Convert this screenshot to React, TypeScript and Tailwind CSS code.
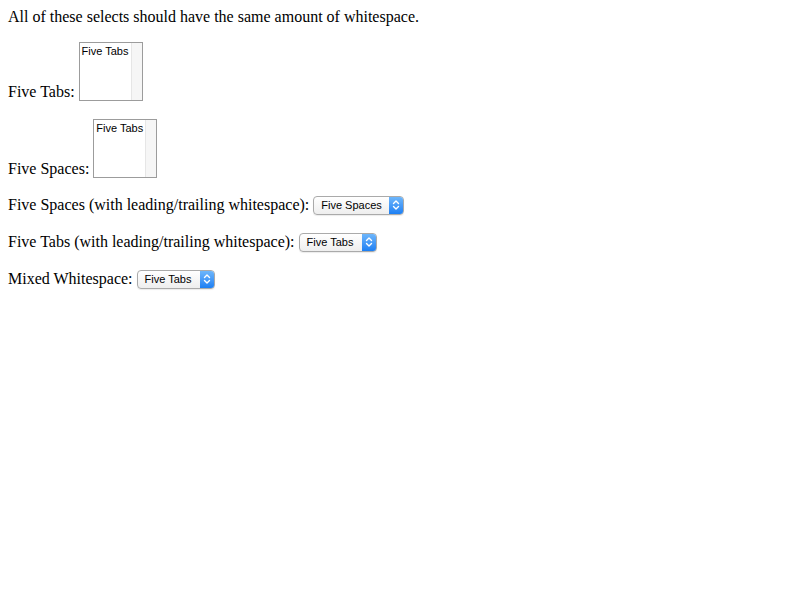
const serif = "font-['Liberation_Serif','Times_New_Roman',serif]";
const sans = "font-['Liberation_Sans',Arial,sans-serif]";

function ListBox({ width, label }: { width: string; label: string }) {
  return (
    <div className={`flex h-[59px] ${width} border border-[#9c9c9c] bg-white`}>
      <div className={`flex-1 pl-[2px] pt-[1px] text-[11px] leading-[14px] text-black ${sans}`}>
        {label}
      </div>
      <div className="w-[11px] border-l border-[#e6e6e6] bg-[#f6f6f6]" />
    </div>
  );
}

function PopUp({ width, label }: { width: string; label: string }) {
  return (
    <div
      className={`flex h-[19px] ${width} overflow-hidden rounded-[4px] border border-[#aaaaaa] bg-linear-to-b from-white to-[#eeeeee] shadow-[0_1px_1px_rgba(0,0,0,0.08)]`}
    >
      <div className={`flex flex-1 items-center pl-[7px] text-[11px] text-black ${sans}`}>
        {label}
      </div>
      <div className="flex w-[14px] items-center justify-center bg-linear-to-b from-[#6db6fb] to-[#1b7ff3]">
        <svg width="8" height="12" viewBox="0 0 8 12" fill="none">
          <path d="M1.5 4.5 L4 2 L6.5 4.5" stroke="white" strokeWidth="1.4" strokeLinecap="round" strokeLinejoin="round" />
          <path d="M1.5 7.5 L4 10 L6.5 7.5" stroke="white" strokeWidth="1.4" strokeLinecap="round" strokeLinejoin="round" />
        </svg>
      </div>
    </div>
  );
}

export default function App() {
  return (
    <div className={`min-h-[600px] w-[800px] bg-white p-2 text-[16px] text-black ${serif}`}>
      <p className="h-[18px] leading-[18px]">All of these selects should have the same amount of whitespace.</p>

      {/* list boxes */}
      <div className="mt-4 flex items-end gap-[4px]">
        <span className="leading-[18px]">Five Tabs:</span>
        <ListBox width="w-[64px]" label="Five Tabs" />
      </div>
      <div className="mt-[18px] flex items-end gap-[4px]">
        <span className="leading-[18px]">Five Spaces:</span>
        <ListBox width="w-[64px]" label="Five Tabs" />
      </div>

      {/* pop-up selects */}
      <div className="mt-[17px] flex h-[20px] items-center gap-[4px]">
        <span className="leading-[18px]">Five Spaces (with leading/trailing whitespace):</span>
        <PopUp width="w-[91px]" label="Five Spaces" />
      </div>
      <div className="mt-[17px] flex h-[20px] items-center gap-[4px]">
        <span className="leading-[18px]">Five Tabs (with leading/trailing whitespace):</span>
        <PopUp width="w-[78px]" label="Five Tabs" />
      </div>
      <div className="mt-[17px] flex h-[20px] items-center gap-[4px]">
        <span className="leading-[18px]">Mixed Whitespace:</span>
        <PopUp width="w-[78px]" label="Five Tabs" />
      </div>
    </div>
  );
}
